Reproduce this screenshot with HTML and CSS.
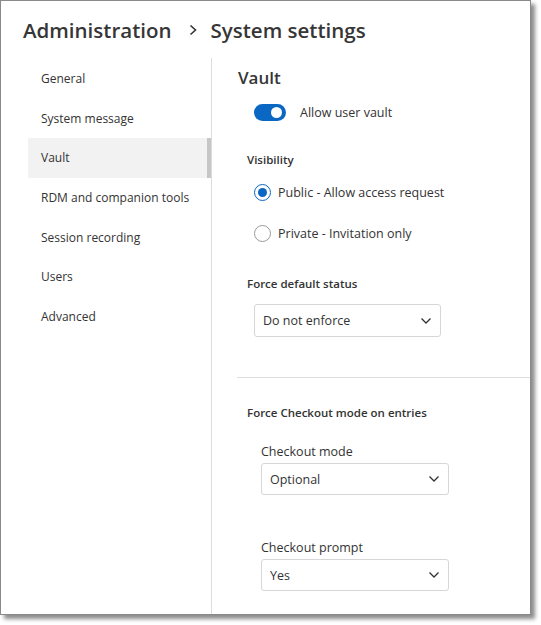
FILE: index.html
```html
<!DOCTYPE html>
<html>
<head>
<meta charset="utf-8">
<link rel="stylesheet" href="styles.css">
</head>
<body>
<div class="window">
  <header class="title">
    <span>Administration</span>
    <svg class="crumb-sep" width="10" height="12" viewBox="0 0 10 12"><path d="M2.5 1.5 L7.5 6 L2.5 10.5" fill="none" stroke="#333" stroke-width="1.6"/></svg>
    <span>System settings</span>
  </header>
  <div class="main">
    <nav class="sidebar">
      <div class="nav-item">General</div>
      <div class="nav-item">System message</div>
      <div class="nav-item active">Vault</div>
      <div class="nav-item">RDM and companion tools</div>
      <div class="nav-item">Session recording</div>
      <div class="nav-item">Users</div>
      <div class="nav-item">Advanced</div>
    </nav>
    <section class="content">
      <h2 class="heading">Vault</h2>
      <div class="toggle-row">
        <span class="toggle"><span class="knob"></span></span>
        <span class="toggle-label">Allow user vault</span>
      </div>
      <div class="label label-visibility">Visibility</div>
      <div class="radio-row first">
        <span class="radio checked"></span>
        <span>Public - Allow access request</span>
      </div>
      <div class="radio-row second">
        <span class="radio"></span>
        <span>Private - Invitation only</span>
      </div>
      <div class="label label-status">Force default status</div>
      <div class="select select-status">
        <span>Do not enforce</span>
        <svg class="chev" width="12" height="8" viewBox="0 0 12 8"><path d="M1.5 1.5 L6 6 L10.5 1.5" fill="none" stroke="#333" stroke-width="1.3"/></svg>
      </div>
      <hr class="divider">
      <div class="label label-checkout">Force Checkout mode on entries</div>
      <div class="sub-label first">Checkout mode</div>
      <div class="select select-sub">
        <span>Optional</span>
        <svg class="chev" width="12" height="8" viewBox="0 0 12 8"><path d="M1.5 1.5 L6 6 L10.5 1.5" fill="none" stroke="#333" stroke-width="1.3"/></svg>
      </div>
      <div class="sub-label second">Checkout prompt</div>
      <div class="select select-sub">
        <span>Yes</span>
        <svg class="chev" width="12" height="8" viewBox="0 0 12 8"><path d="M1.5 1.5 L6 6 L10.5 1.5" fill="none" stroke="#333" stroke-width="1.3"/></svg>
      </div>
    </section>
  </div>
</div>
</body>
</html>
```

FILE: styles.css
```css
* { box-sizing: border-box; }
html, body { margin: 0; padding: 0; background: #fff; }
body {
  font-family: "Open Sans", "Noto Sans", sans-serif;
  color: #333;
  width: 541px;
  height: 625px;
  overflow: hidden;
}
.window {
  width: 531px;
  height: 615px;
  border: 1px solid #8a8a8a;
  background: #fff;
  box-shadow: 4px 4px 4px rgba(0, 0, 0, 0.45);
  display: flex;
  flex-direction: column;
  overflow: hidden;
}
.title {
  height: 57px;
  flex: none;
  display: flex;
  align-items: center;
  padding-left: 22px;
  font-size: 20.5px;
  font-weight: 600;
  color: #363636;
}
.crumb-sep { margin: 0 13px 0 16px; }
.main {
  flex: 1;
  display: flex;
  min-height: 0;
}
.sidebar {
  width: 211px;
  flex: none;
  border-right: 1px solid #dcdcdc;
  padding-left: 27px;
  padding-top: 1px;
}
.nav-item {
  height: 39.6px;
  display: flex;
  align-items: center;
  padding-left: 13px;
  font-size: 12px;
  color: #333;
}
.nav-item.active {
  background: #f2f2f2;
  border-right: 4px solid #c6c6c6;
}
.content {
  flex: 1;
  padding-left: 25px;
  padding-top: 8px;
  min-width: 0;
}
.heading {
  margin: 0 0 0 1px;
  font-size: 17px;
  font-weight: 600;
  line-height: 24px;
  color: #363636;
}
.toggle-row {
  margin-top: 13px;
  margin-left: 17px;
  height: 18px;
  display: flex;
  align-items: center;
  font-size: 12.5px;
}
.toggle {
  width: 32px;
  height: 17px;
  border-radius: 9px;
  background: #0a67c4;
  position: relative;
  flex: none;
}
.knob {
  position: absolute;
  top: 3px;
  right: 4px;
  width: 11px;
  height: 11px;
  border-radius: 50%;
  background: #fff;
}
.toggle-label { margin-left: 14px; }
.label {
  margin-left: 10px;
  font-size: 11.5px;
  font-weight: 600;
  line-height: 16px;
  color: #333;
}
.label-visibility { margin-top: 31px; }
.radio-row {
  margin-left: 17px;
  height: 17px;
  display: flex;
  align-items: center;
  font-size: 12.5px;
}
.radio-row.first { margin-top: 16px; }
.radio-row.second { margin-top: 24px; }
.radio {
  width: 17px;
  height: 17px;
  border-radius: 50%;
  border: 1px solid #9a9a9a;
  margin-right: 7px;
  flex: none;
  position: relative;
  background: #fff;
}
.radio.checked { border-color: #0a67c4; }
.radio.checked::after {
  content: "";
  position: absolute;
  left: 3px;
  top: 3px;
  width: 9px;
  height: 9px;
  border-radius: 50%;
  background: #0a67c4;
}
.label-status { margin-top: 34px; }
.select {
  display: flex;
  align-items: center;
  justify-content: space-between;
  border: 1px solid #d6d6d6;
  border-radius: 3px;
  font-size: 12.5px;
  padding: 0 8px 0 8px;
  background: #fff;
}
.select-status {
  margin-top: 12px;
  margin-left: 17px;
  width: 187px;
  height: 33px;
}
.divider {
  margin: 40px 0 0 0;
  border: none;
  border-top: 1px solid #dedede;
  height: 0;
}
.label-checkout { margin-top: 27px; }
.sub-label {
  margin-left: 24px;
  font-size: 12.5px;
  line-height: 18px;
  color: #333;
}
.sub-label.first { margin-top: 22px; }
.sub-label.second { margin-top: 44px; }
.select-sub {
  margin-top: 2px;
  margin-left: 24px;
  width: 188px;
  height: 32px;
}
```
